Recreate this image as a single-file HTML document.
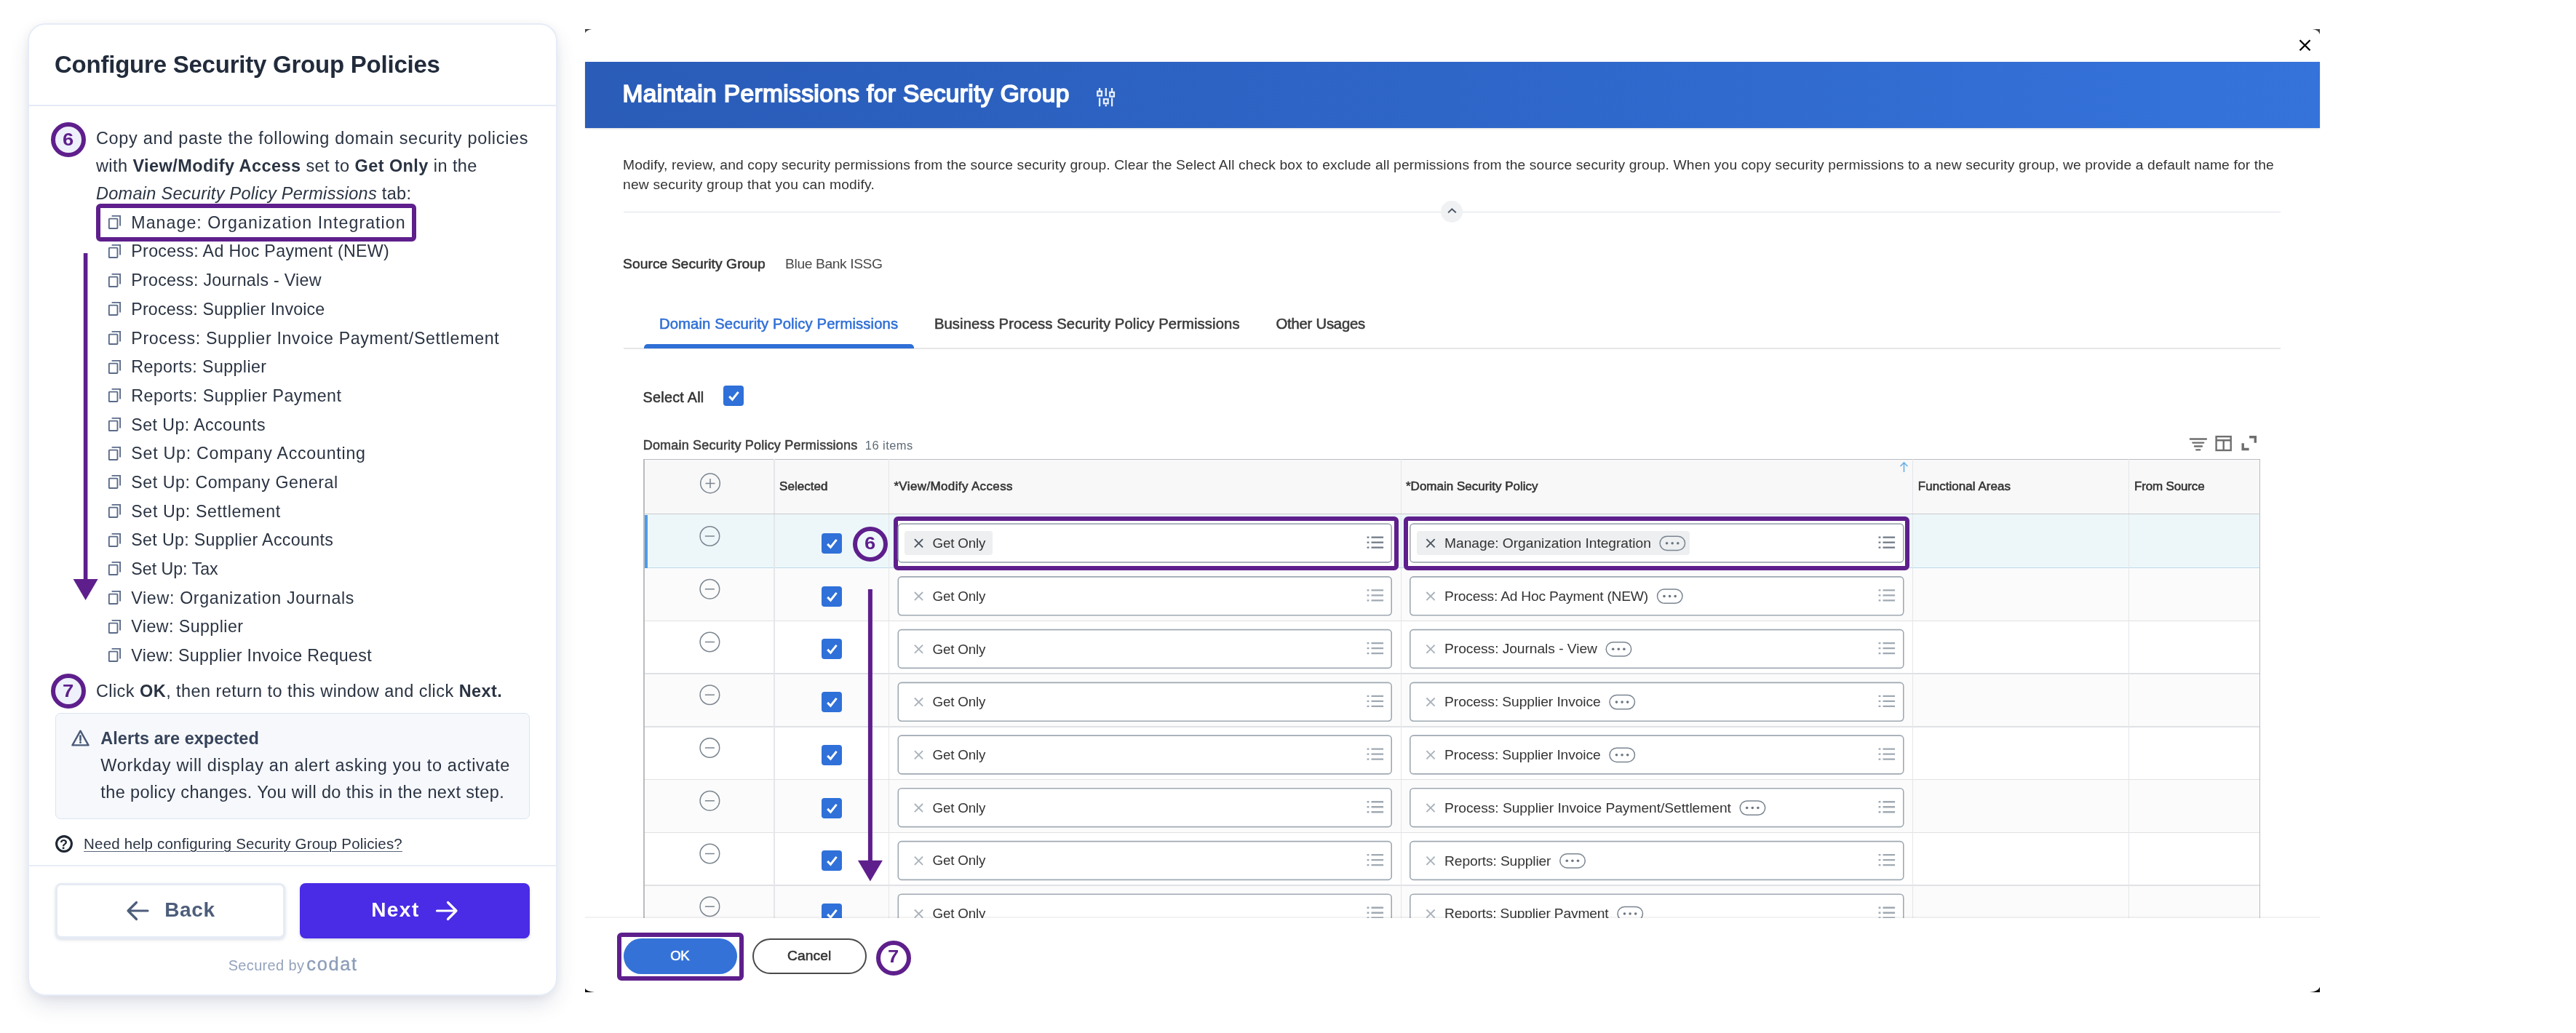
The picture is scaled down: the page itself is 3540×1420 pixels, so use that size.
<!DOCTYPE html>
<html lang="en"><head><meta charset="utf-8"><title>Configure Security Group Policies</title>
<style>
*{box-sizing:border-box;margin:0;padding:0}
html,body{width:3540px;height:1420px;background:#fff;overflow:hidden}
body{position:relative;font-family:"Liberation Sans",sans-serif;color:#333}
#root{position:absolute;left:0;top:0;width:3540px;height:1420px;will-change:transform}
.a{position:absolute}
.t{position:absolute;white-space:nowrap;line-height:1}
svg{position:absolute;overflow:visible}
.m{-webkit-text-stroke:0.55px currentColor}
.num{border:6px solid #5e1f8c;border-radius:50%;background:#eef0fb}
.hl{border:6px solid #5e1f8c;border-radius:6px}
.cb{border-radius:4px;background:#2f70d9}
.inp{border:2px solid #aeb6be;border-radius:5px;background:#fff}
.pill{background:#eeeff1;border-radius:4px}
.ra{border:2px solid #8993a0;border-radius:10px}
</style></head>
<body>
<div id="root">
<div class="a " style="left:38.0px;top:32.0px;width:728.0px;height:1337.0px;border-radius:24px;background:#fff;border:2px solid #e6ecf7;box-shadow:0 14px 30px -5px rgba(40,55,100,.17),0 2px 16px rgba(40,55,100,.055)"></div>
<div class="t " style="left:75.0px;top:72.0px;font-size:33px;letter-spacing:-0.228px;color:#212b3b;"><b>Configure Security Group Policies</b></div>
<div class="a " style="left:40.0px;top:144.0px;width:724.0px;height:1.5px;background:#e4eaf6"></div>
<div class="a num" style="left:70.0px;top:168.0px;width:48.0px;height:48.0px;"></div>
<div class="t " style="left:87.3px;top:180.0px;font-size:24px;color:#5e1f8c;transform:scaleX(1.14)"><b>6</b></div>
<div class="t " style="left:131.9px;top:179.0px;font-size:23.5px;letter-spacing:0.691px;color:#2a3342;">Copy and paste the following domain security policies</div>
<div class="t " style="left:131.9px;top:217.0px;font-size:23.5px;letter-spacing:0.430px;color:#2a3342;">with <b>View/Modify Access</b> set to <b>Get Only</b> in the</div>
<div class="t " style="left:131.9px;top:255.0px;font-size:23.5px;letter-spacing:0.294px;color:#2a3342;"><i>Domain Security Policy Permissions</i> tab:</div>
<svg style="left:148.6px;top:296.1px" width="17" height="19" viewBox="0 0 17 19"><g fill="none" stroke="#5b6b8a" stroke-width="1.9"><rect x="0.85" y="4.6" width="11.6" height="13.4" rx="0.8"/><path d="M4.6 0.85H16.1V14.6"/></g></svg>
<div class="t " style="left:180.3px;top:295.0px;font-size:23.2px;letter-spacing:1.036px;color:#2a3342;">Manage: Organization Integration</div>
<svg style="left:148.6px;top:335.8px" width="17" height="19" viewBox="0 0 17 19"><g fill="none" stroke="#5b6b8a" stroke-width="1.9"><rect x="0.85" y="4.6" width="11.6" height="13.4" rx="0.8"/><path d="M4.6 0.85H16.1V14.6"/></g></svg>
<div class="t " style="left:180.3px;top:334.0px;font-size:23.2px;letter-spacing:0.327px;color:#2a3342;">Process: Ad Hoc Payment (NEW)</div>
<svg style="left:148.6px;top:375.5px" width="17" height="19" viewBox="0 0 17 19"><g fill="none" stroke="#5b6b8a" stroke-width="1.9"><rect x="0.85" y="4.6" width="11.6" height="13.4" rx="0.8"/><path d="M4.6 0.85H16.1V14.6"/></g></svg>
<div class="t " style="left:180.3px;top:374.0px;font-size:23.2px;letter-spacing:0.279px;color:#2a3342;">Process: Journals - View</div>
<svg style="left:148.6px;top:415.1px" width="17" height="19" viewBox="0 0 17 19"><g fill="none" stroke="#5b6b8a" stroke-width="1.9"><rect x="0.85" y="4.6" width="11.6" height="13.4" rx="0.8"/><path d="M4.6 0.85H16.1V14.6"/></g></svg>
<div class="t " style="left:180.3px;top:414.0px;font-size:23.2px;letter-spacing:0.180px;color:#2a3342;">Process: Supplier Invoice</div>
<svg style="left:148.6px;top:454.8px" width="17" height="19" viewBox="0 0 17 19"><g fill="none" stroke="#5b6b8a" stroke-width="1.9"><rect x="0.85" y="4.6" width="11.6" height="13.4" rx="0.8"/><path d="M4.6 0.85H16.1V14.6"/></g></svg>
<div class="t " style="left:180.3px;top:454.0px;font-size:23.2px;letter-spacing:0.664px;color:#2a3342;">Process: Supplier Invoice Payment/Settlement</div>
<svg style="left:148.6px;top:494.5px" width="17" height="19" viewBox="0 0 17 19"><g fill="none" stroke="#5b6b8a" stroke-width="1.9"><rect x="0.85" y="4.6" width="11.6" height="13.4" rx="0.8"/><path d="M4.6 0.85H16.1V14.6"/></g></svg>
<div class="t " style="left:180.3px;top:493.0px;font-size:23.2px;letter-spacing:0.409px;color:#2a3342;">Reports: Supplier</div>
<svg style="left:148.6px;top:534.2px" width="17" height="19" viewBox="0 0 17 19"><g fill="none" stroke="#5b6b8a" stroke-width="1.9"><rect x="0.85" y="4.6" width="11.6" height="13.4" rx="0.8"/><path d="M4.6 0.85H16.1V14.6"/></g></svg>
<div class="t " style="left:180.3px;top:533.0px;font-size:23.2px;letter-spacing:0.481px;color:#2a3342;">Reports: Supplier Payment</div>
<svg style="left:148.6px;top:573.9px" width="17" height="19" viewBox="0 0 17 19"><g fill="none" stroke="#5b6b8a" stroke-width="1.9"><rect x="0.85" y="4.6" width="11.6" height="13.4" rx="0.8"/><path d="M4.6 0.85H16.1V14.6"/></g></svg>
<div class="t " style="left:180.3px;top:573.0px;font-size:23.2px;letter-spacing:0.421px;color:#2a3342;">Set Up: Accounts</div>
<svg style="left:148.6px;top:613.5px" width="17" height="19" viewBox="0 0 17 19"><g fill="none" stroke="#5b6b8a" stroke-width="1.9"><rect x="0.85" y="4.6" width="11.6" height="13.4" rx="0.8"/><path d="M4.6 0.85H16.1V14.6"/></g></svg>
<div class="t " style="left:180.3px;top:612.0px;font-size:23.2px;letter-spacing:0.749px;color:#2a3342;">Set Up: Company Accounting</div>
<svg style="left:148.6px;top:653.2px" width="17" height="19" viewBox="0 0 17 19"><g fill="none" stroke="#5b6b8a" stroke-width="1.9"><rect x="0.85" y="4.6" width="11.6" height="13.4" rx="0.8"/><path d="M4.6 0.85H16.1V14.6"/></g></svg>
<div class="t " style="left:180.3px;top:652.0px;font-size:23.2px;letter-spacing:0.541px;color:#2a3342;">Set Up: Company General</div>
<svg style="left:148.6px;top:692.9px" width="17" height="19" viewBox="0 0 17 19"><g fill="none" stroke="#5b6b8a" stroke-width="1.9"><rect x="0.85" y="4.6" width="11.6" height="13.4" rx="0.8"/><path d="M4.6 0.85H16.1V14.6"/></g></svg>
<div class="t " style="left:180.3px;top:692.0px;font-size:23.2px;letter-spacing:0.610px;color:#2a3342;">Set Up: Settlement</div>
<svg style="left:148.6px;top:732.6px" width="17" height="19" viewBox="0 0 17 19"><g fill="none" stroke="#5b6b8a" stroke-width="1.9"><rect x="0.85" y="4.6" width="11.6" height="13.4" rx="0.8"/><path d="M4.6 0.85H16.1V14.6"/></g></svg>
<div class="t " style="left:180.3px;top:731.0px;font-size:23.2px;letter-spacing:0.340px;color:#2a3342;">Set Up: Supplier Accounts</div>
<svg style="left:148.6px;top:772.3px" width="17" height="19" viewBox="0 0 17 19"><g fill="none" stroke="#5b6b8a" stroke-width="1.9"><rect x="0.85" y="4.6" width="11.6" height="13.4" rx="0.8"/><path d="M4.6 0.85H16.1V14.6"/></g></svg>
<div class="t " style="left:180.3px;top:771.0px;font-size:23.2px;letter-spacing:-0.011px;color:#2a3342;">Set Up: Tax</div>
<svg style="left:148.6px;top:811.9px" width="17" height="19" viewBox="0 0 17 19"><g fill="none" stroke="#5b6b8a" stroke-width="1.9"><rect x="0.85" y="4.6" width="11.6" height="13.4" rx="0.8"/><path d="M4.6 0.85H16.1V14.6"/></g></svg>
<div class="t " style="left:180.3px;top:811.0px;font-size:23.2px;letter-spacing:0.686px;color:#2a3342;">View: Organization Journals</div>
<svg style="left:148.6px;top:851.6px" width="17" height="19" viewBox="0 0 17 19"><g fill="none" stroke="#5b6b8a" stroke-width="1.9"><rect x="0.85" y="4.6" width="11.6" height="13.4" rx="0.8"/><path d="M4.6 0.85H16.1V14.6"/></g></svg>
<div class="t " style="left:180.3px;top:850.0px;font-size:23.2px;letter-spacing:0.454px;color:#2a3342;">View: Supplier</div>
<svg style="left:148.6px;top:891.3px" width="17" height="19" viewBox="0 0 17 19"><g fill="none" stroke="#5b6b8a" stroke-width="1.9"><rect x="0.85" y="4.6" width="11.6" height="13.4" rx="0.8"/><path d="M4.6 0.85H16.1V14.6"/></g></svg>
<div class="t " style="left:180.3px;top:890.0px;font-size:23.2px;letter-spacing:0.338px;color:#2a3342;">View: Supplier Invoice Request</div>
<div class="a hl" style="left:131.8px;top:280.2px;width:439.8px;height:51.4px;"></div>
<svg style="left:0;top:0" width="800" height="1420"><path d="M117.6 348V800" stroke="#5e1f8c" stroke-width="5.6"/><path d="M100.6 796H134.6L117.6 825Z" fill="#5e1f8c"/></svg>
<div class="a num" style="left:70.0px;top:926.0px;width:48.0px;height:48.0px;"></div>
<div class="t " style="left:87.3px;top:938.0px;font-size:24px;color:#5e1f8c;transform:scaleX(1.14)"><b>7</b></div>
<div class="t " style="left:131.9px;top:939.0px;font-size:23.5px;letter-spacing:0.440px;color:#2a3342;">Click <b>OK</b>, then return to this window and click <b>Next.</b></div>
<div class="a " style="left:76.0px;top:979.8px;width:652.0px;height:146.2px;background:#f6f8fc;border:1px solid #dce4f1;border-radius:7px"></div>
<svg style="left:97px;top:1002px" width="27" height="25" viewBox="0 0 27 25"><path d="M13.5 2.7L24.5 22.4H2.5Z" fill="none" stroke="#4a5a78" stroke-width="2.4" stroke-linejoin="round"/><path d="M13.5 9.6V15.6" stroke="#4a5a78" stroke-width="2.6" stroke-linecap="round"/><circle cx="13.5" cy="18.6" r="1.5" fill="#4a5a78"/></svg>
<div class="t " style="left:138.3px;top:1004.0px;font-size:23.5px;letter-spacing:0.037px;color:#36435a;"><b>Alerts are expected</b></div>
<div class="t " style="left:138.3px;top:1041.0px;font-size:23.5px;letter-spacing:0.658px;color:#2a3342;">Workday will display an alert asking you to activate</div>
<div class="t " style="left:138.3px;top:1078.0px;font-size:23.5px;letter-spacing:0.379px;color:#2a3342;">the policy changes. You will do this in the next step.</div>
<svg style="left:75.6px;top:1147.8px" width="24" height="24" viewBox="0 0 24 24"><circle cx="12" cy="12" r="10.4" fill="none" stroke="#1f2733" stroke-width="3.1"/></svg>
<div class="t " style="left:82.0px;top:1152.0px;font-size:18px;color:#1f2733;"><b>?</b></div>
<div class="t " style="left:115.1px;top:1150.0px;font-size:20.5px;letter-spacing:0.179px;color:#2a3342;text-decoration:underline;text-decoration-thickness:1.2px;text-underline-offset:2.5px;text-decoration-color:#596579">Need help configuring Security Group Policies?</div>
<div class="a " style="left:40.0px;top:1189.0px;width:724.0px;height:1.5px;background:#e8edf6"></div>
<div class="a " style="left:76.0px;top:1214.0px;width:316.0px;height:76.0px;background:#fff;border:3px solid #e6ebf5;border-radius:8px;box-shadow:0 2px 4px rgba(60,80,130,.18)"></div>
<div class="a " style="left:411.5px;top:1214.0px;width:316.5px;height:76.0px;background:#4a2be6;border-radius:8px;box-shadow:0 2px 4px rgba(60,80,130,.2)"></div>
<div class="t " style="left:226.3px;top:1237.0px;font-size:28px;letter-spacing:0.593px;color:#4d5d7a;"><b>Back</b></div>
<div class="t " style="left:510.2px;top:1237.0px;font-size:28px;letter-spacing:1.443px;color:#fff;"><b>Next</b></div>
<svg style="left:0;top:0" width="800" height="1420"><g fill="none" stroke-width="3.2" stroke-linecap="round" stroke-linejoin="round"><path d="M203 1252H176M187.5 1240.5L176 1252L187.5 1263.5" stroke="#4d5d7a"/><path d="M600.5 1252H627M615.5 1240.5L627 1252L615.5 1263.5" stroke="#fff"/></g></svg>
<div class="t " style="left:313.7px;top:1317.0px;font-size:20px;letter-spacing:0.336px;color:#94a3bd;">Secured by</div>
<div class="t " style="left:421.3px;top:1313.0px;font-size:25.5px;letter-spacing:1.628px;color:#8d9db8;-webkit-text-stroke:0.35px #8d9db8">codat</div>
<div class="a " style="left:804.0px;top:84.8px;width:2384.0px;height:91.2px;background:linear-gradient(90deg,#2a5cb8 0%,#2e66c8 50%,#3573db 100%);box-shadow:0 1px 2px rgba(0,0,0,.15)"></div>
<div class="t " style="left:855.4px;top:112.0px;font-size:33.5px;letter-spacing:0.379px;color:#fff;-webkit-text-stroke:1.7px #fff">Maintain Permissions for Security Group</div>
<svg style="left:1506.5px;top:121px" width="26" height="26" viewBox="0 0 26 26"><g fill="none" stroke="#e8eefb" stroke-width="2.3"><path d="M4.1 0V4M4.1 13.4V25.2M12.8 0V11.3M12.8 22.7V25.2M21.1 0V5M21.1 13.4V25.2"/><rect x="1.25" y="4.6" width="5.7" height="5.9"/><rect x="9.95" y="15.3" width="5.7" height="5.9"/><rect x="18.25" y="5.8" width="5.7" height="5.9"/></g></svg>
<div class="t " style="left:856.0px;top:217.0px;font-size:19.25px;letter-spacing:0.131px;color:#333;">Modify, review, and copy security permissions from the source security group. Clear the Select All check box to exclude all permissions from the source security group. When you copy security permissions to a new security group, we provide a default name for the</div>
<div class="t " style="left:856.0px;top:244.0px;font-size:19.25px;letter-spacing:0.212px;color:#333;">new security group that you can modify.</div>
<div class="a " style="left:856.9px;top:290.8px;width:2277.1px;height:1.5px;background:#e1e4ea"></div>
<div class="a " style="left:1979.9px;top:275.8px;width:30.6px;height:30.6px;background:#f0f1f3;border-radius:50%"></div>
<svg style="left:1980px;top:276px" width="31" height="31" viewBox="0 0 31 31"><path d="M10.1 16.4L15.3 11.3L20.8 16.3" fill="none" stroke="#4a5563" stroke-width="2"/></svg>
<div class="t " style="left:856.0px;top:353.0px;font-size:19.25px;letter-spacing:0.055px;color:#333;"><span class="m">Source Security Group</span></div>
<div class="t " style="left:1079.1px;top:353.0px;font-size:19.25px;letter-spacing:-0.398px;color:#494949;">Blue Bank ISSG</div>
<div class="t " style="left:905.9px;top:435.0px;font-size:20.3px;letter-spacing:0.110px;color:#2f6fd6;"><span class="m">Domain Security Policy Permissions</span></div>
<div class="t " style="left:1283.9px;top:435.0px;font-size:20.3px;letter-spacing:0.087px;color:#3b3b3b;"><span class="m">Business Process Security Policy Permissions</span></div>
<div class="t " style="left:1753.4px;top:435.0px;font-size:20.3px;letter-spacing:-0.210px;color:#3b3b3b;"><span class="m">Other Usages</span></div>
<div class="a " style="left:856.9px;top:478.3px;width:2277.1px;height:1.5px;background:#e6e6e6"></div>
<div class="a " style="left:884.5px;top:473.0px;width:371.8px;height:5.6px;background:#2f6fd6;border-radius:5px 5px 0 0"></div>
<div class="t " style="left:883.6px;top:537.0px;font-size:19.8px;letter-spacing:0.248px;color:#333;"><span class="m">Select All</span></div>
<div class="a cb" style="left:993.5px;top:530.0px;width:28.0px;height:28.0px;"></div>
<svg style="left:993.5px;top:530.0px" width="28" height="28" viewBox="0 0 28 28"><path d="M8.2 14.9L12.4 19.2L20.6 8.9" fill="none" stroke="#fff" stroke-width="3"/></svg>
<div class="t " style="left:883.7px;top:603.0px;font-size:18px;letter-spacing:0.195px;color:#3d3d3d;"><span class="m">Domain Security Policy Permissions</span></div>
<div class="t " style="left:1188.8px;top:604.0px;font-size:16.5px;letter-spacing:0.432px;color:#5e6a75;">16 items</div>
<svg style="left:0;top:0" width="3540" height="1420"><g stroke="#6e6e6e" fill="none"><path d="M3009.8 603.5H3032M3013.3 608.6H3028.3M3015.9 613.5H3026M3018.2 618.4H3023.3" stroke-width="2.3" stroke-linecap="round"/><rect x="3045.6" y="600.1" width="20.1" height="18.9" stroke-width="2.4"/><path d="M3045.6 605.2H3065.7M3055.7 605.2V619" stroke-width="2.4"/><path d="M3091.1 600.8H3099.3V608.8M3082.2 609.3V617.5H3090.6" stroke-width="3.4"/></g></svg>
<div class="a " style="left:885.0px;top:631.3px;width:2220.5px;height:75.3px;background:#f8f8f9"></div>
<div class="a" style="left:885px;top:706.6px;width:2220.5px;height:555.4px;overflow:hidden">
<div class="a " style="left:0.0px;top:0.0px;width:2220.5px;height:74.0px;background:#edf7fa"></div>
<div class="a " style="left:0.0px;top:74.0px;width:2220.5px;height:72.8px;background:#fbfbfb"></div>
<div class="a " style="left:0.0px;top:146.8px;width:2220.5px;height:72.8px;background:#fff"></div>
<div class="a " style="left:0.0px;top:219.5px;width:2220.5px;height:72.8px;background:#fbfbfb"></div>
<div class="a " style="left:0.0px;top:292.3px;width:2220.5px;height:72.7px;background:#fff"></div>
<div class="a " style="left:0.0px;top:365.0px;width:2220.5px;height:72.8px;background:#fbfbfb"></div>
<div class="a " style="left:0.0px;top:437.8px;width:2220.5px;height:72.8px;background:#fff"></div>
<div class="a " style="left:0.0px;top:510.5px;width:2220.5px;height:72.8px;background:#fbfbfb"></div>
<div class="a " style="left:0.0px;top:73.3px;width:2220.5px;height:1.5px;background:#bcd9ea"></div>
<div class="a " style="left:0.0px;top:146.0px;width:2220.5px;height:1.5px;background:#dfe1e4"></div>
<div class="a " style="left:0.0px;top:218.8px;width:2220.5px;height:1.5px;background:#dfe1e4"></div>
<div class="a " style="left:0.0px;top:291.5px;width:2220.5px;height:1.5px;background:#dfe1e4"></div>
<div class="a " style="left:0.0px;top:364.3px;width:2220.5px;height:1.5px;background:#dfe1e4"></div>
<div class="a " style="left:0.0px;top:437.0px;width:2220.5px;height:1.5px;background:#dfe1e4"></div>
<div class="a " style="left:0.0px;top:509.8px;width:2220.5px;height:1.5px;background:#dfe1e4"></div>
<div class="a " style="left:0.0px;top:582.5px;width:2220.5px;height:1.5px;background:#dfe1e4"></div>
<div class="a " style="left:0.0px;top:1.0px;width:5.2px;height:73.0px;background:#4d9be8"></div>
<div class="a " style="left:178.2px;top:0.0px;width:1.5px;height:555.4px;background:#e4e6e9"></div>
<div class="a " style="left:335.5px;top:0.0px;width:1.5px;height:555.4px;background:#e4e6e9"></div>
<div class="a " style="left:1039.5px;top:0.0px;width:1.5px;height:555.4px;background:#e4e6e9"></div>
<div class="a " style="left:1742.8px;top:0.0px;width:1.5px;height:555.4px;background:#e4e6e9"></div>
<div class="a " style="left:2039.7px;top:0.0px;width:1.5px;height:555.4px;background:#e4e6e9"></div>
</div>
<div class="a " style="left:884.2px;top:631.3px;width:1.5px;height:630.7px;background:#b9bcc0"></div>
<div class="a " style="left:3104.8px;top:631.3px;width:1.5px;height:630.7px;background:#b9bcc0"></div>
<div class="a " style="left:885.0px;top:630.5px;width:2220.5px;height:1.5px;background:#b9bcc0"></div>
<div class="a " style="left:1063.2px;top:631.3px;width:1.5px;height:75.3px;background:#e4e6e9"></div>
<div class="a " style="left:1220.5px;top:631.3px;width:1.5px;height:75.3px;background:#e4e6e9"></div>
<div class="a " style="left:1924.5px;top:631.3px;width:1.5px;height:75.3px;background:#e4e6e9"></div>
<div class="a " style="left:2627.8px;top:631.3px;width:1.5px;height:75.3px;background:#e4e6e9"></div>
<div class="a " style="left:2924.7px;top:631.3px;width:1.5px;height:75.3px;background:#e4e6e9"></div>
<div class="a " style="left:885.0px;top:705.7px;width:2220.5px;height:1.8px;background:#cacaca"></div>
<div class="t " style="left:1071.1px;top:660.0px;font-size:17px;letter-spacing:0.024px;color:#333;"><span class="m">Selected</span></div>
<div class="t " style="left:1228.4px;top:660.0px;font-size:17px;letter-spacing:0.367px;color:#333;"><span class="m">*View/Modify Access</span></div>
<div class="t " style="left:1932.0px;top:660.0px;font-size:17px;letter-spacing:0.006px;color:#333;"><span class="m">*Domain Security Policy</span></div>
<div class="t " style="left:2635.8px;top:660.0px;font-size:17px;letter-spacing:0.040px;color:#333;"><span class="m">Functional Areas</span></div>
<div class="t " style="left:2933.1px;top:660.0px;font-size:17px;letter-spacing:-0.172px;color:#333;"><span class="m">From Source</span></div>
<svg style="left:0;top:0" width="3540" height="1420"><g fill="none" stroke="#7b858f" stroke-width="1.5"><circle cx="976" cy="664.4" r="13.3"/><path d="M969.5 664.4H982.5M976 657.9V670.9"/></g><path d="M2616.5 649V636M2611.5 641L2616.5 636L2621.5 641" fill="none" stroke="#6ab0e6" stroke-width="1.6"/></svg>
<div class="a" style="left:0;top:0;width:3540px;height:1262px;overflow:hidden">
<div class="a cb" style="left:1128.5px;top:732.8px;width:28.0px;height:28.0px;"></div>
<svg style="left:1128.5px;top:732.8px" width="28" height="28" viewBox="0 0 28 28"><path d="M8.2 14.9L12.4 19.2L20.6 8.9" fill="none" stroke="#fff" stroke-width="3"/></svg>
<div class="a hl" style="left:1228.4px;top:710.0px;width:693.9px;height:73.6px;background:#fff"></div>
<div class="a hl" style="left:1928.6px;top:710.0px;width:695.0px;height:73.6px;background:#fff"></div>
<div class="a " style="left:1233.5px;top:719.3px;width:679.5px;height:54.4px;background:#fff;border-radius:5px"></div>
<div class="a " style="left:1937.0px;top:719.3px;width:679.6px;height:54.4px;background:#fff;border-radius:5px"></div>
<div class="a pill" style="left:1242.8px;top:730.2px;width:121.2px;height:33.0px;"></div>
<div class="a pill" style="left:1947.0px;top:730.2px;width:375.3px;height:33.0px;"></div>
<div class="t " style="left:1281.6px;top:738.0px;font-size:18.8px;letter-spacing:-0.184px;color:#333;">Get Only</div>
<div class="t " style="left:1985.1px;top:737.0px;font-size:19.25px;letter-spacing:-0.064px;color:#333;">Manage: Organization Integration</div>
<div class="a cb" style="left:1128.5px;top:805.6px;width:28.0px;height:28.0px;"></div>
<svg style="left:1128.5px;top:805.6px" width="28" height="28" viewBox="0 0 28 28"><path d="M8.2 14.9L12.4 19.2L20.6 8.9" fill="none" stroke="#fff" stroke-width="3"/></svg>
<div class="a " style="left:1233.5px;top:792.1px;width:679.5px;height:54.4px;background:#fff;border-radius:5px"></div>
<div class="a " style="left:1937.0px;top:792.1px;width:679.6px;height:54.4px;background:#fff;border-radius:5px"></div>
<div class="t " style="left:1281.6px;top:811.0px;font-size:18.8px;letter-spacing:-0.184px;color:#333;">Get Only</div>
<div class="t " style="left:1985.1px;top:810.0px;font-size:19.25px;letter-spacing:-0.235px;color:#333;">Process: Ad Hoc Payment (NEW)</div>
<div class="a cb" style="left:1128.5px;top:878.3px;width:28.0px;height:28.0px;"></div>
<svg style="left:1128.5px;top:878.3px" width="28" height="28" viewBox="0 0 28 28"><path d="M8.2 14.9L12.4 19.2L20.6 8.9" fill="none" stroke="#fff" stroke-width="3"/></svg>
<div class="a " style="left:1233.5px;top:864.8px;width:679.5px;height:54.4px;background:#fff;border-radius:5px"></div>
<div class="a " style="left:1937.0px;top:864.8px;width:679.6px;height:54.4px;background:#fff;border-radius:5px"></div>
<div class="t " style="left:1281.6px;top:884.0px;font-size:18.8px;letter-spacing:-0.184px;color:#333;">Get Only</div>
<div class="t " style="left:1985.1px;top:882.0px;font-size:19.25px;letter-spacing:-0.072px;color:#333;">Process: Journals - View</div>
<div class="a cb" style="left:1128.5px;top:951.1px;width:28.0px;height:28.0px;"></div>
<svg style="left:1128.5px;top:951.1px" width="28" height="28" viewBox="0 0 28 28"><path d="M8.2 14.9L12.4 19.2L20.6 8.9" fill="none" stroke="#fff" stroke-width="3"/></svg>
<div class="a " style="left:1233.5px;top:937.6px;width:679.5px;height:54.4px;background:#fff;border-radius:5px"></div>
<div class="a " style="left:1937.0px;top:937.6px;width:679.6px;height:54.4px;background:#fff;border-radius:5px"></div>
<div class="t " style="left:1281.6px;top:956.0px;font-size:18.8px;letter-spacing:-0.184px;color:#333;">Get Only</div>
<div class="t " style="left:1985.1px;top:955.0px;font-size:19.25px;letter-spacing:-0.107px;color:#333;">Process: Supplier Invoice</div>
<div class="a cb" style="left:1128.5px;top:1023.8px;width:28.0px;height:28.0px;"></div>
<svg style="left:1128.5px;top:1023.8px" width="28" height="28" viewBox="0 0 28 28"><path d="M8.2 14.9L12.4 19.2L20.6 8.9" fill="none" stroke="#fff" stroke-width="3"/></svg>
<div class="a " style="left:1233.5px;top:1010.3px;width:679.5px;height:54.4px;background:#fff;border-radius:5px"></div>
<div class="a " style="left:1937.0px;top:1010.3px;width:679.6px;height:54.4px;background:#fff;border-radius:5px"></div>
<div class="t " style="left:1281.6px;top:1029.0px;font-size:18.8px;letter-spacing:-0.184px;color:#333;">Get Only</div>
<div class="t " style="left:1985.1px;top:1028.0px;font-size:19.25px;letter-spacing:-0.107px;color:#333;">Process: Supplier Invoice</div>
<div class="a cb" style="left:1128.5px;top:1096.5px;width:28.0px;height:28.0px;"></div>
<svg style="left:1128.5px;top:1096.5px" width="28" height="28" viewBox="0 0 28 28"><path d="M8.2 14.9L12.4 19.2L20.6 8.9" fill="none" stroke="#fff" stroke-width="3"/></svg>
<div class="a " style="left:1233.5px;top:1083.0px;width:679.5px;height:54.4px;background:#fff;border-radius:5px"></div>
<div class="a " style="left:1937.0px;top:1083.0px;width:679.6px;height:54.4px;background:#fff;border-radius:5px"></div>
<div class="t " style="left:1281.6px;top:1102.0px;font-size:18.8px;letter-spacing:-0.184px;color:#333;">Get Only</div>
<div class="t " style="left:1985.1px;top:1101.0px;font-size:19.25px;letter-spacing:-0.048px;color:#333;">Process: Supplier Invoice Payment/Settlement</div>
<div class="a cb" style="left:1128.5px;top:1169.3px;width:28.0px;height:28.0px;"></div>
<svg style="left:1128.5px;top:1169.3px" width="28" height="28" viewBox="0 0 28 28"><path d="M8.2 14.9L12.4 19.2L20.6 8.9" fill="none" stroke="#fff" stroke-width="3"/></svg>
<div class="a " style="left:1233.5px;top:1155.8px;width:679.5px;height:54.4px;background:#fff;border-radius:5px"></div>
<div class="a " style="left:1937.0px;top:1155.8px;width:679.6px;height:54.4px;background:#fff;border-radius:5px"></div>
<div class="t " style="left:1281.6px;top:1174.0px;font-size:18.8px;letter-spacing:-0.184px;color:#333;">Get Only</div>
<div class="t " style="left:1985.1px;top:1174.0px;font-size:19.25px;letter-spacing:-0.144px;color:#333;">Reports: Supplier</div>
<div class="a cb" style="left:1128.5px;top:1242.0px;width:28.0px;height:28.0px;"></div>
<svg style="left:1128.5px;top:1242.0px" width="28" height="28" viewBox="0 0 28 28"><path d="M8.2 14.9L12.4 19.2L20.6 8.9" fill="none" stroke="#fff" stroke-width="3"/></svg>
<div class="a " style="left:1233.5px;top:1228.5px;width:679.5px;height:54.4px;background:#fff;border-radius:5px"></div>
<div class="a " style="left:1937.0px;top:1228.5px;width:679.6px;height:54.4px;background:#fff;border-radius:5px"></div>
<div class="t " style="left:1281.6px;top:1247.0px;font-size:18.8px;letter-spacing:-0.184px;color:#333;">Get Only</div>
<div class="t " style="left:1985.1px;top:1246.0px;font-size:19.25px;letter-spacing:-0.184px;color:#333;">Reports: Supplier Payment</div>
<svg style="left:0;top:0" width="3540" height="1262"><g fill="none" stroke="#7b858f" stroke-width="1.5"><circle cx="975.4" cy="737.0" r="13.3"/><path d="M968.9 737.0H981.9"/></g><rect x="1234.3" y="720.1" width="677.9" height="52.8" rx="4.6" fill="none" stroke="#9fa9b3" stroke-width="1.6"/><rect x="1937.8" y="720.1" width="678.0" height="52.8" rx="4.6" fill="none" stroke="#9fa9b3" stroke-width="1.6"/><path d="M1256.9 741.2L1268.1 752.4M1268.1 741.2L1256.9 752.4" stroke="#4a5561" stroke-width="1.9" fill="none"/><path d="M1960.4 741.2L1971.6 752.4M1971.6 741.2L1960.4 752.4" stroke="#4a5561" stroke-width="1.9" fill="none"/><g stroke="#6f7a86" stroke-width="2.4"><path d="M1884.5 738.6H1901.1M1884.5 745.6H1901.1M1884.5 752.6H1901.1"/><path d="M1878.6 738.6H1881.4M1878.6 745.6H1881.4M1878.6 752.6H1881.4"/></g><g stroke="#6f7a86" stroke-width="2.4"><path d="M2587.5 738.6H2604.1M2587.5 745.6H2604.1M2587.5 752.6H2604.1"/><path d="M2581.6 738.6H2584.4M2581.6 745.6H2584.4M2581.6 752.6H2584.4"/></g><rect x="2281.1" y="737.2" width="34.5" height="19.2" rx="9.6" fill="none" stroke="#7a8591" stroke-width="1.5"/><circle cx="2290.6" cy="746.8" r="1.8" fill="#6b7682"/><circle cx="2298.2" cy="746.8" r="1.8" fill="#6b7682"/><circle cx="2305.8" cy="746.8" r="1.8" fill="#6b7682"/><g fill="none" stroke="#7b858f" stroke-width="1.5"><circle cx="975.4" cy="809.8" r="13.3"/><path d="M968.9 809.8H981.9"/></g><rect x="1234.3" y="792.9" width="677.9" height="52.8" rx="4.6" fill="none" stroke="#9fa9b3" stroke-width="1.6"/><rect x="1937.8" y="792.9" width="678.0" height="52.8" rx="4.6" fill="none" stroke="#9fa9b3" stroke-width="1.6"/><path d="M1256.9 814.0L1268.1 825.2M1268.1 814.0L1256.9 825.2" stroke="#aab2bb" stroke-width="1.9" fill="none"/><path d="M1960.4 814.0L1971.6 825.2M1971.6 814.0L1960.4 825.2" stroke="#aab2bb" stroke-width="1.9" fill="none"/><g stroke="#a0a9b3" stroke-width="2.4"><path d="M1884.5 811.4H1901.1M1884.5 818.4H1901.1M1884.5 825.4H1901.1"/><path d="M1878.6 811.4H1881.4M1878.6 818.4H1881.4M1878.6 825.4H1881.4"/></g><g stroke="#a0a9b3" stroke-width="2.4"><path d="M2587.5 811.4H2604.1M2587.5 818.4H2604.1M2587.5 825.4H2604.1"/><path d="M2581.6 811.4H2584.4M2581.6 818.4H2584.4M2581.6 825.4H2584.4"/></g><rect x="2277.5" y="810.0" width="34.5" height="19.2" rx="9.6" fill="none" stroke="#7a8591" stroke-width="1.5"/><circle cx="2287.0" cy="819.6" r="1.8" fill="#6b7682"/><circle cx="2294.6" cy="819.6" r="1.8" fill="#6b7682"/><circle cx="2302.2" cy="819.6" r="1.8" fill="#6b7682"/><g fill="none" stroke="#7b858f" stroke-width="1.5"><circle cx="975.4" cy="882.5" r="13.3"/><path d="M968.9 882.5H981.9"/></g><rect x="1234.3" y="865.6" width="677.9" height="52.8" rx="4.6" fill="none" stroke="#9fa9b3" stroke-width="1.6"/><rect x="1937.8" y="865.6" width="678.0" height="52.8" rx="4.6" fill="none" stroke="#9fa9b3" stroke-width="1.6"/><path d="M1256.9 886.7L1268.1 897.9M1268.1 886.7L1256.9 897.9" stroke="#aab2bb" stroke-width="1.9" fill="none"/><path d="M1960.4 886.7L1971.6 897.9M1971.6 886.7L1960.4 897.9" stroke="#aab2bb" stroke-width="1.9" fill="none"/><g stroke="#a0a9b3" stroke-width="2.4"><path d="M1884.5 884.1H1901.1M1884.5 891.1H1901.1M1884.5 898.1H1901.1"/><path d="M1878.6 884.1H1881.4M1878.6 891.1H1881.4M1878.6 898.1H1881.4"/></g><g stroke="#a0a9b3" stroke-width="2.4"><path d="M2587.5 884.1H2604.1M2587.5 891.1H2604.1M2587.5 898.1H2604.1"/><path d="M2581.6 884.1H2584.4M2581.6 891.1H2584.4M2581.6 898.1H2584.4"/></g><rect x="2207.2" y="882.7" width="34.5" height="19.2" rx="9.6" fill="none" stroke="#7a8591" stroke-width="1.5"/><circle cx="2216.7" cy="892.3" r="1.8" fill="#6b7682"/><circle cx="2224.3" cy="892.3" r="1.8" fill="#6b7682"/><circle cx="2231.9" cy="892.3" r="1.8" fill="#6b7682"/><g fill="none" stroke="#7b858f" stroke-width="1.5"><circle cx="975.4" cy="955.2" r="13.3"/><path d="M968.9 955.2H981.9"/></g><rect x="1234.3" y="938.4" width="677.9" height="52.8" rx="4.6" fill="none" stroke="#9fa9b3" stroke-width="1.6"/><rect x="1937.8" y="938.4" width="678.0" height="52.8" rx="4.6" fill="none" stroke="#9fa9b3" stroke-width="1.6"/><path d="M1256.9 959.5L1268.1 970.7M1268.1 959.5L1256.9 970.7" stroke="#aab2bb" stroke-width="1.9" fill="none"/><path d="M1960.4 959.5L1971.6 970.7M1971.6 959.5L1960.4 970.7" stroke="#aab2bb" stroke-width="1.9" fill="none"/><g stroke="#a0a9b3" stroke-width="2.4"><path d="M1884.5 956.9H1901.1M1884.5 963.9H1901.1M1884.5 970.9H1901.1"/><path d="M1878.6 956.9H1881.4M1878.6 963.9H1881.4M1878.6 970.9H1881.4"/></g><g stroke="#a0a9b3" stroke-width="2.4"><path d="M2587.5 956.9H2604.1M2587.5 963.9H2604.1M2587.5 970.9H2604.1"/><path d="M2581.6 956.9H2584.4M2581.6 963.9H2584.4M2581.6 970.9H2584.4"/></g><rect x="2212.0" y="955.5" width="34.5" height="19.2" rx="9.6" fill="none" stroke="#7a8591" stroke-width="1.5"/><circle cx="2221.5" cy="965.1" r="1.8" fill="#6b7682"/><circle cx="2229.1" cy="965.1" r="1.8" fill="#6b7682"/><circle cx="2236.7" cy="965.1" r="1.8" fill="#6b7682"/><g fill="none" stroke="#7b858f" stroke-width="1.5"><circle cx="975.4" cy="1028.0" r="13.3"/><path d="M968.9 1028.0H981.9"/></g><rect x="1234.3" y="1011.1" width="677.9" height="52.8" rx="4.6" fill="none" stroke="#9fa9b3" stroke-width="1.6"/><rect x="1937.8" y="1011.1" width="678.0" height="52.8" rx="4.6" fill="none" stroke="#9fa9b3" stroke-width="1.6"/><path d="M1256.9 1032.2L1268.1 1043.4M1268.1 1032.2L1256.9 1043.4" stroke="#aab2bb" stroke-width="1.9" fill="none"/><path d="M1960.4 1032.2L1971.6 1043.4M1971.6 1032.2L1960.4 1043.4" stroke="#aab2bb" stroke-width="1.9" fill="none"/><g stroke="#a0a9b3" stroke-width="2.4"><path d="M1884.5 1029.6H1901.1M1884.5 1036.6H1901.1M1884.5 1043.6H1901.1"/><path d="M1878.6 1029.6H1881.4M1878.6 1036.6H1881.4M1878.6 1043.6H1881.4"/></g><g stroke="#a0a9b3" stroke-width="2.4"><path d="M2587.5 1029.6H2604.1M2587.5 1036.6H2604.1M2587.5 1043.6H2604.1"/><path d="M2581.6 1029.6H2584.4M2581.6 1036.6H2584.4M2581.6 1043.6H2584.4"/></g><rect x="2212.0" y="1028.2" width="34.5" height="19.2" rx="9.6" fill="none" stroke="#7a8591" stroke-width="1.5"/><circle cx="2221.5" cy="1037.8" r="1.8" fill="#6b7682"/><circle cx="2229.1" cy="1037.8" r="1.8" fill="#6b7682"/><circle cx="2236.7" cy="1037.8" r="1.8" fill="#6b7682"/><g fill="none" stroke="#7b858f" stroke-width="1.5"><circle cx="975.4" cy="1100.8" r="13.3"/><path d="M968.9 1100.8H981.9"/></g><rect x="1234.3" y="1083.8" width="677.9" height="52.8" rx="4.6" fill="none" stroke="#9fa9b3" stroke-width="1.6"/><rect x="1937.8" y="1083.8" width="678.0" height="52.8" rx="4.6" fill="none" stroke="#9fa9b3" stroke-width="1.6"/><path d="M1256.9 1105.0L1268.1 1116.1M1268.1 1105.0L1256.9 1116.1" stroke="#aab2bb" stroke-width="1.9" fill="none"/><path d="M1960.4 1105.0L1971.6 1116.1M1971.6 1105.0L1960.4 1116.1" stroke="#aab2bb" stroke-width="1.9" fill="none"/><g stroke="#a0a9b3" stroke-width="2.4"><path d="M1884.5 1102.3H1901.1M1884.5 1109.3H1901.1M1884.5 1116.3H1901.1"/><path d="M1878.6 1102.3H1881.4M1878.6 1109.3H1881.4M1878.6 1116.3H1881.4"/></g><g stroke="#a0a9b3" stroke-width="2.4"><path d="M2587.5 1102.3H2604.1M2587.5 1109.3H2604.1M2587.5 1116.3H2604.1"/><path d="M2581.6 1102.3H2584.4M2581.6 1109.3H2584.4M2581.6 1116.3H2584.4"/></g><rect x="2391.2" y="1101.0" width="34.5" height="19.2" rx="9.6" fill="none" stroke="#7a8591" stroke-width="1.5"/><circle cx="2400.7" cy="1110.5" r="1.8" fill="#6b7682"/><circle cx="2408.3" cy="1110.5" r="1.8" fill="#6b7682"/><circle cx="2415.9" cy="1110.5" r="1.8" fill="#6b7682"/><g fill="none" stroke="#7b858f" stroke-width="1.5"><circle cx="975.4" cy="1173.5" r="13.3"/><path d="M968.9 1173.5H981.9"/></g><rect x="1234.3" y="1156.6" width="677.9" height="52.8" rx="4.6" fill="none" stroke="#9fa9b3" stroke-width="1.6"/><rect x="1937.8" y="1156.6" width="678.0" height="52.8" rx="4.6" fill="none" stroke="#9fa9b3" stroke-width="1.6"/><path d="M1256.9 1177.7L1268.1 1188.9M1268.1 1177.7L1256.9 1188.9" stroke="#aab2bb" stroke-width="1.9" fill="none"/><path d="M1960.4 1177.7L1971.6 1188.9M1971.6 1177.7L1960.4 1188.9" stroke="#aab2bb" stroke-width="1.9" fill="none"/><g stroke="#a0a9b3" stroke-width="2.4"><path d="M1884.5 1175.1H1901.1M1884.5 1182.1H1901.1M1884.5 1189.1H1901.1"/><path d="M1878.6 1175.1H1881.4M1878.6 1182.1H1881.4M1878.6 1189.1H1881.4"/></g><g stroke="#a0a9b3" stroke-width="2.4"><path d="M2587.5 1175.1H2604.1M2587.5 1182.1H2604.1M2587.5 1189.1H2604.1"/><path d="M2581.6 1175.1H2584.4M2581.6 1182.1H2584.4M2581.6 1189.1H2584.4"/></g><rect x="2143.8" y="1173.7" width="34.5" height="19.2" rx="9.6" fill="none" stroke="#7a8591" stroke-width="1.5"/><circle cx="2153.3" cy="1183.3" r="1.8" fill="#6b7682"/><circle cx="2160.9" cy="1183.3" r="1.8" fill="#6b7682"/><circle cx="2168.5" cy="1183.3" r="1.8" fill="#6b7682"/><g fill="none" stroke="#7b858f" stroke-width="1.5"><circle cx="975.4" cy="1246.2" r="13.3"/><path d="M968.9 1246.2H981.9"/></g><rect x="1234.3" y="1229.3" width="677.9" height="52.8" rx="4.6" fill="none" stroke="#9fa9b3" stroke-width="1.6"/><rect x="1937.8" y="1229.3" width="678.0" height="52.8" rx="4.6" fill="none" stroke="#9fa9b3" stroke-width="1.6"/><path d="M1256.9 1250.5L1268.1 1261.6M1268.1 1250.5L1256.9 1261.6" stroke="#aab2bb" stroke-width="1.9" fill="none"/><path d="M1960.4 1250.5L1971.6 1261.6M1971.6 1250.5L1960.4 1261.6" stroke="#aab2bb" stroke-width="1.9" fill="none"/><g stroke="#a0a9b3" stroke-width="2.4"><path d="M1884.5 1247.8H1901.1M1884.5 1254.8H1901.1M1884.5 1261.8H1901.1"/><path d="M1878.6 1247.8H1881.4M1878.6 1254.8H1881.4M1878.6 1261.8H1881.4"/></g><g stroke="#a0a9b3" stroke-width="2.4"><path d="M2587.5 1247.8H2604.1M2587.5 1254.8H2604.1M2587.5 1261.8H2604.1"/><path d="M2581.6 1247.8H2584.4M2581.6 1254.8H2584.4M2581.6 1261.8H2584.4"/></g><rect x="2223.0" y="1246.5" width="34.5" height="19.2" rx="9.6" fill="none" stroke="#7a8591" stroke-width="1.5"/><circle cx="2232.5" cy="1256.0" r="1.8" fill="#6b7682"/><circle cx="2240.1" cy="1256.0" r="1.8" fill="#6b7682"/><circle cx="2247.7" cy="1256.0" r="1.8" fill="#6b7682"/></svg>
</div>
<div class="a num" style="left:1171.9px;top:724.0px;width:48.0px;height:48.0px;background:transparent"></div>
<div class="t " style="left:1189.2px;top:735.0px;font-size:24px;color:#5e1f8c;transform:scaleX(1.14)"><b>6</b></div>
<svg style="left:0;top:0" width="3540" height="1420"><path d="M1195.9 810V1186" stroke="#5e1f8c" stroke-width="6"/><path d="M1178.9 1182.7H1212.9L1195.9 1211.5Z" fill="#5e1f8c"/></svg>
<div class="a " style="left:804.0px;top:1259.0px;width:2384.0px;height:3.0px;background:linear-gradient(180deg,rgba(0,0,0,0),rgba(0,0,0,.07))"></div>
<div class="a " style="left:804.0px;top:1262.0px;width:2384.0px;height:100.0px;background:#fff"></div>
<div class="a hl" style="left:848.0px;top:1282.0px;width:173.8px;height:66.0px;"></div>
<div class="a " style="left:856.9px;top:1290.0px;width:156.1px;height:49.0px;background:#3472d8;border-radius:25px"></div>
<div class="a " style="left:1033.9px;top:1290.0px;width:157.0px;height:49.0px;background:#fff;border:2px solid #4a4a4a;border-radius:25px"></div>
<div class="t " style="left:921.3px;top:1305.0px;font-size:18.6px;color:#fff;letter-spacing:-0.4px"><span class="m">OK</span></div>
<div class="t " style="left:1081.9px;top:1304.0px;font-size:19.2px;letter-spacing:0.132px;color:#333;"><span class="m">Cancel</span></div>
<div class="a num" style="left:1203.7px;top:1292.6px;width:48.0px;height:48.0px;background:transparent"></div>
<div class="t " style="left:1221.0px;top:1303.0px;font-size:24px;color:#5e1f8c;transform:scaleX(1.14)"><b>7</b></div>
<svg style="left:0;top:0" width="3540" height="1420"><path d="M804 40H813.5Q806 41 804 45.5Z" fill="#444"/><path d="M3188 40H3177.5Q3186 41 3188 47Z" fill="#444"/><path d="M804 1364V1358.8Q806.5 1363.2 817 1364Z" fill="#0a0f0a"/><path d="M3188 1364V1356.8Q3185.5 1363 3174 1364Z" fill="#0a0f0a"/><path d="M3160.5 55.2L3174.5 69.2M3174.5 55.2L3160.5 69.2" stroke="#000" stroke-width="2.3"/></svg>
</div>
</body></html>
